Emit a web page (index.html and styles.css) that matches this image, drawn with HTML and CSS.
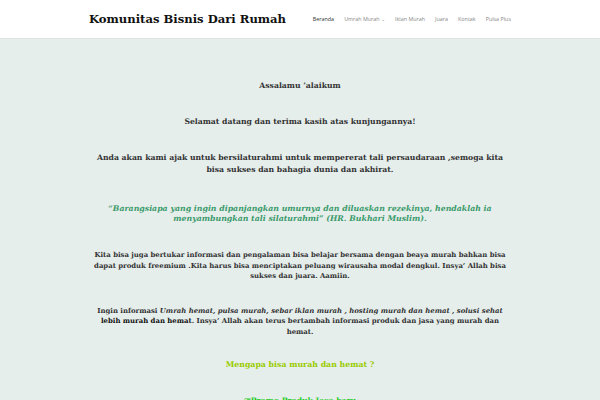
FILE: index.html
```html
<!DOCTYPE html>
<html>
<head>
<meta charset="utf-8">
<link rel="stylesheet" href="styles.css">
</head>
<body>
<header class="site-header">
  <div class="header-inner">
    <div class="site-title">Komunitas Bisnis Dari Rumah</div>
    <nav class="main-nav">
      <a class="nav-item active">Beranda</a>
      <a class="nav-item">Umrah Murah <span class="chev">&#8964;</span></a>
      <a class="nav-item">Iklan Murah</a>
      <a class="nav-item">Juara</a>
      <a class="nav-item">Kontak</a>
      <a class="nav-item">Pulsa Plus</a>
    </nav>
  </div>
</header>
<main class="content">
  <p class="p-greet">Assalamu &#8217;alaikum</p>
  <p class="p-welcome">Selamat datang dan terima kasih atas kunjungannya!</p>
  <p class="p-anda">Anda akan kami ajak untuk bersilaturahmi untuk mempererat tali persaudaraan ,semoga kita bisa sukses dan bahagia dunia dan akhirat.</p>
  <p class="p-quote"><em>&#8220;Barangsiapa yang ingin dipanjangkan umurnya dan diluaskan rezekinya, hendaklah ia menyambungkan tali silaturahmi&#8221; (HR. Bukhari Muslim).</em></p>
  <p class="p-kita">Kita bisa juga bertukar informasi dan pengalaman bisa belajar bersama dengan beaya murah bahkan bisa dapat produk freemium .Kita harus bisa menciptakan peluang wirausaha modal dengkul. Insya&#8217; Allah bisa sukses dan juara. Aamiin.</p>
  <p class="p-ingin">Ingin informasi <em>Umrah hemat, pulsa murah, sebar iklan murah , hosting murah dan hemat , solusi sehat</em> <strong>lebih murah dan hemat</strong>. Insya&#8217; Allah akan terus bertambah informasi produk dan jasa yang murah dan hemat.</p>
  <p class="p-mengapa">Mengapa bisa murah dan hemat ?</p>
  <p class="p-promo">&#9758;Promo Produk Jasa baru</p>
</main>
</body>
</html>
```
FILE: styles.css
```css
* { box-sizing: border-box; }
html, body { margin: 0; padding: 0; }
body {
  background: #e6eeec;
  height: 400px;
  overflow: hidden;
}
.site-header {
  background: #ffffff;
  height: 39px;
  border-bottom: 1px solid #dfe3e2;
}
.header-inner {
  width: 422px;
  margin: 0 auto;
  height: 38px;
  display: flex;
  align-items: center;
  justify-content: space-between;
}
.site-title {
  font-family: "DejaVu Serif", serif;
  font-weight: bold;
  font-size: 11.6px;
  color: #111;
  white-space: nowrap;
}
.main-nav {
  display: flex;
  gap: 10px;
  font-family: "Open Sans", sans-serif;
  font-size: 5.4px;
  white-space: nowrap;
}
.nav-item { color: #888; }
.nav-item.active { color: #333; }
.chev { font-size: 5.4px; }
.content {
  width: 420px;
  margin: 0 auto;
  padding-top: 41px;
  text-align: center;
  font-family: "DejaVu Serif", serif;
  font-weight: bold;
  font-size: 7.7px;
  line-height: 12px;
  color: #333;
}
.content p { margin: 0; }
.p-greet { margin-bottom: 24px !important; }
.p-welcome { margin-bottom: 24px !important; }
.p-anda { margin-bottom: 28px !important; }
.p-quote {
  color: #3a9a6a;
  font-size: 7.8px;
  line-height: 10px;
  margin-bottom: 26px !important;
}
.p-quote em { font-style: italic; }
.p-kita {
  font-size: 6.9px;
  line-height: 10.5px;
  margin-bottom: 24px !important;
}
.p-ingin {
  font-size: 6.9px;
  line-height: 10.5px;
  margin-bottom: 21.5px !important;
}
.p-ingin strong { color: #111; }
.p-mengapa {
  color: #99cc00;
  font-size: 7.8px;
  margin-bottom: 24px !important;
}
.p-promo { color: #22cc22; }
```
